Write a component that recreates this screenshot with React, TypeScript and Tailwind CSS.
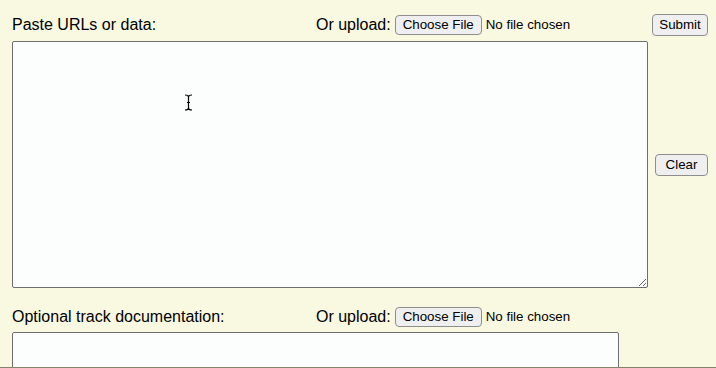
import React from 'react';

const FileInput: React.FC = () => (
  <span className="ml-[4px] flex items-center">
    <button
      type="button"
      className="h-[20px] w-[87px] rounded-[4px] border border-[#8e8e8e] bg-[#efefef] text-[13.33px] leading-none text-black"
    >
      Choose File
    </button>
    <span className="ml-[4px] text-[13.33px] text-black">No file chosen</span>
  </span>
);

const SideButton: React.FC<{ label: string; className?: string }> = ({ label, className }) => (
  <button
    type="button"
    className={
      'h-[22px] rounded-[4px] border border-[#8e8e8e] bg-[#efefef] text-[13.33px] leading-none text-black ' +
      (className ?? '')
    }
  >
    {label}
  </button>
);

export default function App() {
  return (
    <div className="relative h-[368px] w-[716px] overflow-hidden border-b border-[#84846c] bg-[#f9f9e1] font-['Liberation_Sans',Arial,sans-serif] text-black">
      <div className="grid grid-cols-[636px_56px] gap-x-[4px] pl-[12px] pt-[14px]">
        {/* row 1 */}
        <div className="flex h-[22px] items-center text-[16px]">
          <span className="w-[304px]">Paste URLs or data:</span>
          <span>Or upload:</span>
          <FileInput />
        </div>
        <SideButton label="Submit" className="w-[56px]" />

        {/* row 2 */}
        <textarea
          className="mt-[5px] h-[247px] w-[636px] rounded-[2px] border border-[#6e6e6e] bg-[#fcfdfd] p-[2px] outline-none"
          spellCheck={false}
        />
        <div className="mt-[5px] flex items-center justify-end">
          <SideButton label="Clear" className="w-[53px]" />
        </div>

        {/* row 3 */}
        <div className="mt-[18px] flex h-[22px] items-center text-[16px]">
          <span className="w-[304px]">Optional track documentation:</span>
          <span>Or upload:</span>
          <FileInput />
        </div>
        <div />

        {/* row 4 */}
        <textarea
          className="mt-[4px] h-[60px] w-[607px] rounded-[2px] border border-[#6e6e6e] bg-[#fcfdfd] p-[2px] outline-none"
          spellCheck={false}
        />
        <div />
      </div>

      {/* mouse text cursor */}
      <svg className="absolute left-[184px] top-[94px]" width="9" height="17" viewBox="0 0 9 17">
        <path d="M1 1 Q4.5 1 4.5 3 Q4.5 1 8 1 M4.5 3 V14 M1 16 Q4.5 16 4.5 14 Q4.5 16 8 16 M3 8.5 H6" stroke="#000" strokeWidth="1.2" fill="none" />
      </svg>
    </div>
  );
}
